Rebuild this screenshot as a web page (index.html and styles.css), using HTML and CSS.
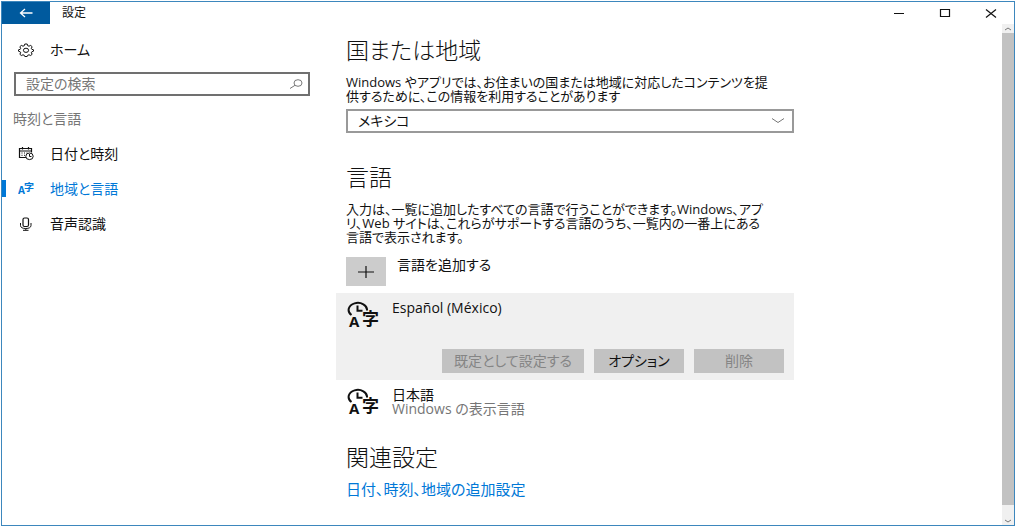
FILE: index.html
```html
<!DOCTYPE html>
<html lang="ja">
<head>
<meta charset="utf-8">
<title>設定</title>
<link rel="stylesheet" href="styles.css">
</head>
<body>
<svg class="defs" aria-hidden="true">
  <symbol id="lang" viewBox="0 0 34 28">
    <path d="M4.500 14A9.200 7 0 1 1 20 9.500M10.500 4.500v5.300h5" fill="none" stroke="currentColor" stroke-width="2"/>
    <text x="2" y="26" class="glyph-a">A</text>
    <text x="15" y="24" class="glyph-ji">字</text>
  </symbol>
</svg>
<div class="window">
  <header class="titlebar">
    <button class="back" aria-label="戻る"><svg width="14" height="10" viewBox="0 0 14 10"><path d="M13.500 5H1.500M6 1L1.500 5L6 9" fill="none" stroke="currentColor" stroke-width="1.300"/></svg></button>
    <span class="title">設定</span>
    <div class="controls">
      <button aria-label="最小化"><svg width="12" height="10" viewBox="0 0 12 10"><path d="M1 5.500h10" stroke="currentColor"/></svg></button>
      <button aria-label="最大化"><svg width="12" height="10" viewBox="0 0 12 10"><path d="M1.500 1.500h9v7h-9z" fill="none" stroke="currentColor" stroke-width="1.200"/></svg></button>
      <button aria-label="閉じる"><svg width="12" height="10" viewBox="0 0 12 10"><path d="M1 1.500l10 8M11 1.500l-10 8" stroke="currentColor" stroke-width="1.200"/></svg></button>
    </div>
  </header>
  <div class="body">
    <nav class="side">
      <a class="item home" href="#"><svg width="16" height="14" viewBox="0 0 16 14"><path d="M6.800 1h2.400l.5 1.700 1.300.5 1.700-.8 1.500 1.400-.9 1.500.5 1 1.700.5v1.400l-1.700.6-.5 1 .9 1.400-1.500 1.300-1.700-.7-1.300.5-.5 1.200H6.800l-.5-1.200-1.300-.5-1.700.7-1.500-1.300.9-1.400-.5-1L.5 8.200V6.800l1.700-.5.5-1-.9-1.500 1.500-1.400 1.700.8 1.300-.5z" fill="none" stroke="currentColor"/><ellipse cx="8" cy="7.300" rx="2.600" ry="2.100" fill="none" stroke="currentColor"/></svg>ホーム</a>
      <div class="search">
        <input type="search" aria-label="設定の検索" placeholder="設定の検索">
        <svg width="14" height="10" viewBox="0 0 14 10"><ellipse cx="9" cy="4" rx="4" ry="3.300" fill="none" stroke="currentColor"/><path d="M6 6.300L1 9.500" stroke="currentColor"/></svg>
      </div>
      <h2 class="group">時刻と言語</h2>
      <a class="item" href="#"><svg width="16" height="14" viewBox="0 0 16 14"><path d="M8 10.500H1.500v-9h12v4M1.500 4h12M4.500 0v2.500M10.500 0v2.500" fill="none" stroke="currentColor" stroke-width="1.200"/><path d="M3.500 6h1M6 6h1M8.500 6h1M3.500 8.300h1M6 8.300h1" stroke="currentColor"/><ellipse cx="11.500" cy="9.300" rx="3.700" ry="3.300" fill="#fff" stroke="currentColor"/><path d="M11.500 7v2.500h2" fill="none" stroke="currentColor"/></svg>日付と時刻</a>
      <a class="item current" href="#" aria-current="page"><svg width="16" height="14" viewBox="0 0 16 14"><text x="0" y="12" class="small-a">A</text><text x="6" y="9" class="small-ji">字</text></svg>地域と言語</a>
      <a class="item" href="#"><svg width="16" height="14" viewBox="0 0 16 14"><rect x="5" y="1" width="5.500" height="8.500" rx="1.500" fill="none" stroke="currentColor" stroke-width="1.200"/><path d="M2.500 6v2.500c0 2 2 3 5.200 3s5.300-1 5.300-3V6M7.800 11.500v1.800M5 13.300h5.500" fill="none" stroke="currentColor"/></svg>音声認識</a>
    </nav>
    <main class="content">
      <section>
        <h1>国または地域</h1>
        <p><label for="country">Windows やアプリでは、お住まいの国または地域に対応したコンテンツを提<br>供するために、この情報を利用することがあります</label></p>
        <div class="select">
          <select id="country"><option>メキシコ</option></select>
          <svg width="14" height="8" viewBox="0 0 14 8"><path d="M1 1.500l6 4 6-4" fill="none" stroke="currentColor"/></svg>
        </div>
      </section>
      <section>
        <h1>言語</h1>
        <p>入力は、一覧に追加したすべての言語で行うことができます。Windows、アプ<br>リ、Web サイトは、これらがサポートする言語のうち、一覧内の一番上にある<br>言語で表示されます。</p>
        <div class="add">
          <button id="add" aria-labelledby="add-label"><svg width="18" height="14" viewBox="0 0 18 14"><path d="M1 7h16M9 1v12" stroke="currentColor" stroke-width="1.200"/></svg></button>
          <label id="add-label" for="add">言語を追加する</label>
        </div>
        <div class="lang selected">
          <div class="lang-row"><svg width="34" height="28"><use href="#lang"/></svg><div>Español (México)</div></div>
          <div class="actions">
            <button class="wide" disabled>既定として設定する</button>
            <button>オプション</button>
            <button disabled>削除</button>
          </div>
        </div>
        <div class="lang">
          <div class="lang-row"><svg width="34" height="28"><use href="#lang"/></svg><div>日本語<div class="note">Windows の表示言語</div></div></div>
        </div>
      </section>
      <section class="related">
        <h1>関連設定</h1>
        <a class="link" href="#">日付、時刻、地域の追加設定</a>
      </section>
    </main>
    <div class="scrollbar" aria-hidden="true">
      <svg width="8" height="9" viewBox="0 0 8 9"><path d="M1 6l3-2 3 2" fill="none" stroke="currentColor"/></svg>
      <div class="thumb"></div>
      <svg class="down" width="8" height="9" viewBox="0 0 8 9"><path d="M1 4l3 2 3-2" fill="none" stroke="currentColor"/></svg>
    </div>
  </div>
</div>
</body>
</html>
```
FILE: styles.css
```css
* { box-sizing: border-box; }
body {
  margin: 0;
  padding: 1px;
  background: #fff;
  color: #111;
  font: 14px/14px "Open Sans", "Noto Sans CJK JP", sans-serif;
  font-feature-settings: "palt";
}
button, input, select { font: inherit; font-feature-settings: inherit; color: inherit; border: 0; padding: 0; border-radius: 0; }
svg { display: block; flex: none; }
a { color: inherit; text-decoration: none; }
h1, h2, p { margin: 0; font-weight: 400; }
p { font-size: 13px; }
.defs { display: none; }
.window {
  display: flex;
  flex-direction: column;
  min-height: calc(100vh - 2px);
  border: 1px solid #3d87bd;
}
.titlebar { display: flex; align-items: center; height: 22px; }
.back { width: 48px; height: 22px; display: grid; place-items: center; background: #005a9e; color: #fff; }
.title { margin-left: 12px; font-size: 12px; }
.controls { display: flex; margin-left: auto; }
.controls button { width: 46px; height: 22px; display: grid; place-items: center; background: none; }
.body { display: flex; flex: 1; }
.side { flex: 0 0 334px; padding: 8px 26px 0 0; }
.item { display: flex; align-items: center; gap: 16px; height: 35px; padding-left: 16px; }
.current { color: #0078d7; }
.current::before { content: ""; width: 4px; height: 17px; margin: 0 -4px 0 -16px; background: #0078d7; }
.search { display: grid; align-items: center; margin: 5px 0 0 12px; color: #777; }
.search > * { grid-area: 1 / 1; }
.search svg { justify-self: end; margin-right: 7px; }
.search input { width: 100%; height: 24px; padding: 0 28px 1px 10px; border: 2px solid #707070; background: none; outline: 0; }
.search input::placeholder { color: #767676; opacity: 1; }
.group { margin: 16px 0 10px 11px; font-size: 14px; line-height: 14px; color: #767676; }
.content { flex: 0 1 458px; padding: 13px 0 0 10px; }
h1 { font-size: 23px; line-height: 26px; font-weight: 300; margin-bottom: 12px; }
.select { display: grid; align-items: center; margin-top: 6px; }
.select > * { grid-area: 1 / 1; }
.select svg { justify-self: end; margin-right: 9px; color: #777; pointer-events: none; }
select { appearance: none; width: 100%; height: 24px; padding: 0 28px 0 10px; border: 2px solid #999; background: #fff; }
section + section { margin-top: 31px; }
section + .related { margin-top: 28px; }
.add { display: flex; align-items: flex-start; gap: 11px; margin-top: 13px; }
.add button { width: 40px; height: 29px; display: grid; place-items: center; background: #ccc; }
.add label { margin-top: 1px; }
.lang { margin-left: -10px; padding: 8px 10px 0 11px; }
.lang-row { display: flex; gap: 11px; }
.selected { margin-top: 7px; background: #f0f0f0; padding-bottom: 7px; }
.note { color: #767676; }
.actions { display: flex; justify-content: flex-end; gap: 10px; margin-top: 20px; }
.actions button { width: 90px; height: 24px; background: #c2c2c2; }
.actions .wide { width: 142px; }
.actions button:disabled { color: #858585; }
.link { display: inline-block; font-size: 15px; color: #0078d7; }
.glyph-a { font: 700 15px "Open Sans", sans-serif; fill: currentColor; }
.glyph-ji { font: 700 17px "Noto Sans CJK JP", sans-serif; fill: currentColor; }
.small-a { font: 700 10px "Open Sans", sans-serif; fill: currentColor; }
.small-ji { font: 700 10px "Noto Sans CJK JP", sans-serif; fill: currentColor; }
.scrollbar { display: flex; flex-direction: column; align-items: center; width: 12px; margin-left: auto; background: #f0f0f0; color: #777; }
.thumb { flex: 1; width: 100%; background: #c2c2c2; }
.down { margin-top: 11px; }
```
